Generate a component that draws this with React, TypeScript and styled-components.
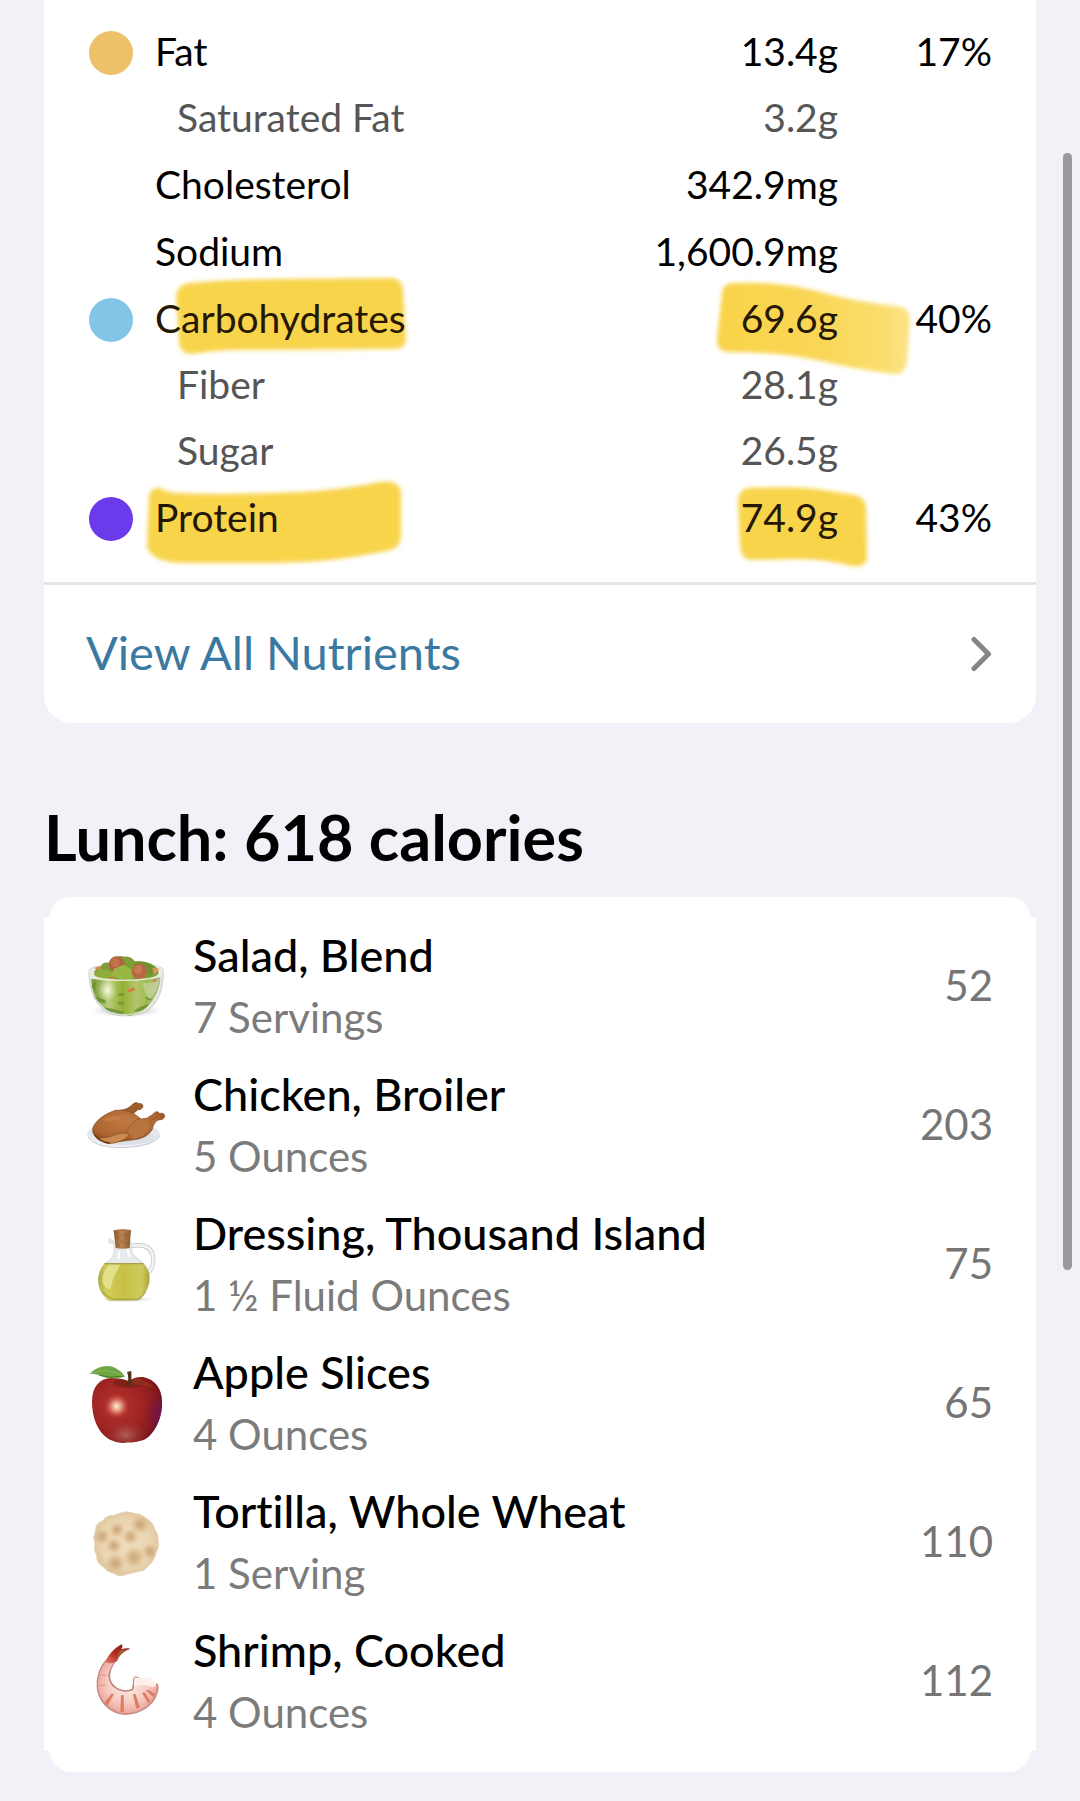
import React from "react";
import styled, { createGlobalStyle } from "styled-components";

const GlobalStyle = createGlobalStyle`
  *, *::before, *::after { box-sizing: border-box; }
  body {
    margin: 0;
    background: #f2f1f8;
    color: #000;
    font-family: Lato, "Open Sans", sans-serif;
    font-variant-ligatures: none;
  }
`;

const Page = styled.main`
  position: relative;
  padding: 0 44px 29px;
  overflow: hidden;
`;

const ScrollThumb = styled.div`
  position: absolute;
  top: 153px;
  right: 8px;
  width: 9px;
  height: 1117px;
  border-radius: 5px;
  background: #99989e;
`;

const NutrientCard = styled.section`
  padding-top: 19px;
  background: #fff;
  border-radius: 0 0 28px 28px;
`;

const NutrientTable = styled.table`
  width: 100%;
  margin-bottom: 30px;
  border-collapse: collapse;
  table-layout: fixed;
  font-size: 39px;
  line-height: 48px;
`;

const NutrientRow = styled.tr<{ $sub?: boolean }>`
  height: ${(p) => (p.$sub ? 66 : 67)}px;
  color: ${(p) => (p.$sub ? "#555" : "#000")};
`;

const DotCell = styled.td`
  width: 111px;
  padding: 0 0 0 45px;
`;

const Dot = styled.span<{ $color: string }>`
  display: block;
  width: 44px;
  height: 44px;
  border-radius: 50%;
  background: ${(p) => p.$color};
`;

const NameCell = styled.th<{ $sub?: boolean }>`
  position: relative;
  padding: 0 0 4px ${(p) => (p.$sub ? 22 : 0)}px;
  font-weight: 400;
  text-align: left;
`;

const AmountCell = styled.td`
  position: relative;
  width: 280px;
  padding: 0 0 4px;
  text-align: right;
`;

const PercentCell = styled.td`
  width: 198px;
  padding: 0 44px 4px 0;
  text-align: right;
`;

const CellText = styled.span<{ $marked?: boolean }>`
  position: relative;
  z-index: 1;
  color: ${(p) => (p.$marked ? "#241703" : "inherit")};
`;

const MarkSvg = styled.svg<{ $top: number; $left?: number; $right?: number }>`
  position: absolute;
  top: ${(p) => p.$top}px;
  left: ${(p) => (p.$left === undefined ? "auto" : `${p.$left}px`)};
  right: ${(p) => (p.$right === undefined ? "auto" : `${p.$right}px`)};
`;

const ViewAllLink = styled.a`
  display: flex;
  align-items: center;
  justify-content: space-between;
  height: 141px;
  padding: 0 44px 0 42px;
  border-top: 3px solid #e5e5e6;
  color: #3a79a1;
  font-size: 47px;
  line-height: 56px;
  text-decoration: none;
`;

const ViewAllLabel = styled.span`
  padding-bottom: 4px;
`;

const MealHeading = styled.h2`
  margin: 78px 0 24px;
  font-size: 63px;
  font-weight: 700;
  line-height: 72px;
`;

const MealCap = styled.div<{ $bottom?: boolean }>`
  height: ${(p) => (p.$bottom ? 21 : 20)}px;
  margin: 0 6px;
  background: #fff;
  border-radius: ${(p) => (p.$bottom ? "0 0 24px 24px" : "24px 24px 0 0")};
`;

const FoodList = styled.ul`
  margin: 0;
  padding: 0;
  list-style: none;
  background: #fff;
`;

const FoodRow = styled.li`
  display: flex;
  align-items: center;
  gap: 28px;
  height: 139px;
  padding: 0 43px 1px 41px;
`;

const FoodText = styled.div`
  flex: 1;
  line-height: 62px;
`;

const FoodName = styled.div`
  font-size: 45px;
  font-weight: 500;
`;

const FoodServing = styled.div`
  color: #7b7b7b;
  font-size: 42px;
`;

const Calories = styled.span`
  padding-bottom: 2px;
  color: #757575;
  font-size: 42px;
`;

type MarkProps = { d: string; w: number; h: number; top: number; left?: number; right?: number; fade?: boolean };

function Mark({ d, w, h, top, left, right, fade }: MarkProps) {
  return (
    <MarkSvg width={w} height={h} viewBox={`0 0 ${w} ${h}`} $top={top} $left={left} $right={right} aria-hidden="true">
      <defs>
        <filter id="soft" x="-5%" y="-10%" width="110%" height="120%">
          <feGaussianBlur stdDeviation="2" />
        </filter>
        <linearGradient id="fade">
          <stop offset="0" stopColor="#f9d349" />
          <stop offset="0.5" stopColor="#f9d655" />
          <stop offset="0.85" stopColor="#fadd6c" />
          <stop offset="1" stopColor="#fbe385" />
        </linearGradient>
      </defs>
      <path d={d} fill={fade ? "url(#fade)" : "#f8d44c"} filter="url(#soft)" />
    </MarkSvg>
  );
}

type Nutrient = {
  name: string;
  amount: string;
  percent?: string;
  color?: string;
  sub?: boolean;
  nameMark?: MarkProps;
  amountMark?: MarkProps;
};

const nutrients: Nutrient[] = [
  { name: "Fat", amount: "13.4g", percent: "17%", color: "#ecc169" },
  { name: "Saturated Fat", amount: "3.2g", sub: true },
  { name: "Cholesterol", amount: "342.9mg" },
  { name: "Sodium", amount: "1,600.9mg" },
  {
    name: "Carbohydrates",
    amount: "69.6g",
    percent: "40%",
    color: "#83c5e6",
    nameMark: {
      w: 242, h: 92, top: -16, left: 15,
      d: "M6 26 Q8 14 20 13 Q60 9 110 9 L222 8 Q232 9 233 20 L236 70 Q235 79 224 79 L60 80 Q40 81 22 84 Q10 84 9 72 Z",
    },
    amountMark: {
      w: 202, h: 102, top: -9, right: -77, fade: true,
      d: "M9 16 Q10 6 20 6 Q55 5 80 9 C115 15 130 24 184 29 Q197 31 197 42 L194 84 Q191 99 181 97 C140 93 100 80 64 77 Q40 75 14 75 Q3 73 4 62 Z",
    },
  },
  { name: "Fiber", amount: "28.1g", sub: true },
  { name: "Sugar", amount: "26.5g", sub: true },
  {
    name: "Protein",
    amount: "74.9g",
    percent: "43%",
    color: "#6b3aea",
    nameMark: {
      w: 264, h: 95, top: -10, left: -13,
      d: "M7 20 Q9 12 18 13 Q24 17 34 18 Q80 20 130 18 Q190 17 238 7 Q256 4 259 16 L259 62 Q258 74 244 76 Q190 88 130 88 L40 88 Q10 87 5 72 Z",
    },
    amountMark: {
      w: 138, h: 90, top: -3, right: -33,
      d: "M5 18 Q7 6 16 6 Q60 4 84 7 L122 13 Q132 15 133 26 L134 76 Q133 86 118 84 Q92 77 66 77 L18 78 Q8 77 7 64 Z",
    },
  },
];

function SaladIcon() {
  return (
    <svg width="80" height="80" viewBox="45 52 240 240" aria-hidden="true">
      <defs>
        <linearGradient id="salad" x1="0" y1="0" x2="1" y2="0">
          <stop offset="0" stopColor="#769838" />
          <stop offset="0.25" stopColor="#b7cb78" />
          <stop offset="0.45" stopColor="#93b034" />
          <stop offset="0.65" stopColor="#b3c66b" />
          <stop offset="0.8" stopColor="#a0bb50" />
          <stop offset="1" stopColor="#b1bd98" />
        </linearGradient>
        <radialGradient id="bowlShadow">
          <stop offset="0" stopColor="#777" stopOpacity="0.6" />
          <stop offset="1" stopColor="#999" stopOpacity="0" />
        </radialGradient>
        <radialGradient id="saladGlow">
          <stop offset="0" stopColor="#fffff0" stopOpacity="0.9" />
          <stop offset="1" stopColor="#e8efc0" stopOpacity="0" />
        </radialGradient>
      </defs>
      <ellipse cx="170" cy="246" rx="106" ry="20" fill="url(#bowlShadow)" />
      <path d="M57 124 C56 176 70 226 116 254 Q168 270 220 253 C266 230 282 180 280 122 Q268 108 230 108 L100 112 Q66 112 57 124Z" fill="#e9ece9" stroke="#bfc4c2" strokeWidth="2" />
      <path d="M64 150 Q168 166 272 146 C268 190 250 224 216 246 L180 262 L128 250 C84 232 66 200 64 150Z" fill="url(#salad)" />
      <path d="M72 136 Q72 120 92 116 Q96 98 116 102 L128 90 Q148 78 162 84 Q184 82 194 98 Q220 94 240 106 Q262 112 266 132 Q264 144 230 150 Q160 160 98 150 Q76 148 72 136Z" fill="#7d9e35" />
      <path d="M190 106 Q220 94 244 106 L258 122 L240 144 L222 124Z" fill="#71932f" />
      <path d="M72 118 l20 -6 l4 18 z" fill="#d88a48" />
      <path d="M246 118 l22 2 l-14 18 z" fill="#dd9650" />
      <circle cx="140" cy="107" r="24" fill="#b3623f" />
      <circle cx="136" cy="102" r="13" fill="#c4744d" />
      <path d="M76 128 L94 120 L114 126 L136 132 L128 154 L90 150 L74 142Z" fill="#8eae3c" />
      <path d="M132 120 L160 108 L184 122 L190 150 L158 156 L124 138Z" fill="#98b644" />
      <circle cx="208" cy="128" r="23" fill="#b76744" />
      <circle cx="205" cy="123" r="13" fill="#c97a55" />
      <path d="M170 184 l22 -8 l4 8 l-20 8z M116 144 l20 4 l-4 6 l-14 -4z M246 154 l16 -2 l-8 12z" fill="#d27f45" />
      <path d="M64 174 l14 -20 l-2 34z M70 206 q22 0 38 10 l-4 8 q-18 -2 -34 -18z M100 236 q30 4 62 14 l-4 8 q-40 -2 -58 -22z M142 198 q14 -8 24 0 q-16 8 -24 0z M190 248 q24 -18 48 -22 q-16 26 -48 22z M226 206 q14 -4 20 8 q-16 4 -20 -8z" fill="#6b8f31" opacity="0.85" />
      <path d="M142 226 q20 8 22 -4 q-20 -10 -22 4z" fill="#7e9f38" />
      <ellipse cx="112" cy="184" rx="30" ry="36" fill="url(#saladGlow)" />
      <path d="M218 164 q30 0 48 -10 q-4 40 -28 58 q-16 -20 -20 -48z" fill="#cdd8ad" opacity="0.6" />
      <path d="M58 126 Q60 144 98 151 Q168 160 236 150 Q278 144 280 124" fill="none" stroke="#e6ebd6" strokeWidth="4" />
      <path d="M58 136 C60 186 76 226 118 250 Q168 266 218 250 C262 228 276 184 278 136" fill="none" stroke="#d3dacb" strokeWidth="3" />
    </svg>
  );
}

function ChickenIcon() {
  return (
    <svg width="80" height="80" viewBox="45 48 240 240" aria-hidden="true">
      <defs>
        <radialGradient id="roast" cx="0.45" cy="0.35" r="0.7">
          <stop offset="0" stopColor="#c17b42" />
          <stop offset="0.65" stopColor="#ad6532" />
          <stop offset="1" stopColor="#824418" />
        </radialGradient>
        <linearGradient id="plate" x1="0" y1="0" x2="0" y2="1">
          <stop offset="0" stopColor="#d9dfe8" />
          <stop offset="1" stopColor="#f0f2f6" />
        </linearGradient>
      </defs>
      <ellipse cx="161" cy="197" rx="110" ry="38" fill="url(#plate)" />
      <path d="M54 204 Q72 236 160 236 Q252 232 270 200" fill="none" stroke="#c4c9d0" strokeWidth="3" />
      <ellipse cx="165" cy="205" rx="90" ry="23" fill="#dce1e9" />
      <path d="M150 124 Q174 122 190 104 Q200 97 206 104 Q216 101 219 110 Q218 122 204 122 Q190 136 174 142Z" fill="#9d5d2c" stroke="#7b431b" strokeWidth="2" />
      <path d="M68 184 C67 162 102 134 137 124 Q178 118 213 150 L230 148 Q244 140 258 128 Q267 127 268 134 Q280 130 284 139 Q285 153 264 153 Q251 160 246 183 Q228 211 184 213 L118 222 C83 216 68 200 68 184Z" fill="url(#roast)" stroke="#82491f" strokeWidth="2" />
      <path d="M177 174 Q191 150 216 151 Q236 154 240 172 Q230 204 190 210 Q170 192 177 174Z" fill="#b8743e" />
      <path d="M168 194 Q179 158 211 149 M240 154 Q256 151 264 140" stroke="#8b4c20" strokeWidth="3" fill="none" opacity="0.5" />
      <path d="M96 152 Q126 138 168 142 Q142 154 118 158Z" fill="#c98a51" opacity="0.45" />
      <path d="M86 208 Q120 206 144 194 Q166 189 178 196 Q169 212 142 219 Q116 228 102 220Z" fill="#c98a50" stroke="#8d5023" strokeWidth="2" />
      <path d="M74 198 Q90 220 120 222" stroke="#6e3712" strokeWidth="4" fill="none" />
    </svg>
  );
}

function DressingIcon() {
  return (
    <svg width="80" height="80" viewBox="45 42 240 240" aria-hidden="true">
      <defs>
        <linearGradient id="oil" x1="0" y1="0" x2="1" y2="0">
          <stop offset="0" stopColor="#aeac3d" />
          <stop offset="0.15" stopColor="#d3cd5c" />
          <stop offset="0.5" stopColor="#c6c047" />
          <stop offset="0.85" stopColor="#d0ca5e" />
          <stop offset="1" stopColor="#a9a53a" />
        </linearGradient>
        <linearGradient id="cork" x1="0" y1="0" x2="1" y2="0">
          <stop offset="0" stopColor="#8a5a32" />
          <stop offset="0.45" stopColor="#b8834f" />
          <stop offset="1" stopColor="#8c5c34" />
        </linearGradient>
        <radialGradient id="oilShadow">
          <stop offset="0" stopColor="#777" stopOpacity="0.6" />
          <stop offset="1" stopColor="#999" stopOpacity="0" />
        </radialGradient>
      </defs>
      <ellipse cx="168" cy="268" rx="78" ry="9" fill="url(#oilShadow)" />
      <path d="M180 109 Q239 96 249 137 Q253 174 232 190" fill="none" stroke="#bfc3c4" strokeWidth="13" />
      <path d="M180 109 Q239 96 249 137 Q253 174 232 190" fill="none" stroke="#f1f3f3" strokeWidth="9" />
      <path d="M117 85 L134 96 L182 95 L184 123 Q190 139 210 151 C236 169 246 203 232 237 Q222 260 204 271 L118 272 C88 252 78 212 90 187 Q98 162 120 149 Q130 142 133 122 L132 103 L117 97Z" fill="#e8ebeb" stroke="#c9cdcd" strokeWidth="2" />
      <path d="M103 161 L221 161 C243 184 244 219 224 250 Q214 266 204 271 L118 272 C80 248 74 194 103 161Z" fill="url(#oil)" />
      <path d="M103 161 H221" stroke="#a3a247" strokeWidth="4" />
      <path d="M118 164 L150 165 C132 196 126 216 122 236 Q105 239 98 217 Q94 187 118 164Z" fill="#eeecaa" opacity="0.65" />
      <path d="M98 244 Q112 264 134 268 L204 268 Q220 258 226 244" fill="none" stroke="#99992e" strokeWidth="4" opacity="0.7" />
      <path d="M148 122 L146 146 M173 118 L177 142" stroke="#fff" strokeWidth="6" />
      <path d="M131 62 Q156 57 183 61 L179 114 Q157 119 137 114Z" fill="url(#cork)" />
      <path d="M139 78 l7 3 M162 74 l8 3 M153 94 l7 2 M145 105 l5 1 M168 98 l6 3" stroke="#8d5b33" strokeWidth="3" />
      <path d="M131 63 Q157 57 183 62" stroke="#a57042" strokeWidth="4" fill="none" />
    </svg>
  );
}

function AppleIcon() {
  return (
    <svg width="80" height="80" viewBox="45 38 240 240" aria-hidden="true">
      <defs>
        <radialGradient id="apple" cx="0.36" cy="0.44" r="0.65">
          <stop offset="0" stopColor="#b7322d" />
          <stop offset="0.5" stopColor="#a12523" />
          <stop offset="0.85" stopColor="#84191b" />
          <stop offset="1" stopColor="#641017" />
        </radialGradient>
        <radialGradient id="appleShine">
          <stop offset="0" stopColor="#fff4dd" />
          <stop offset="0.35" stopColor="#efab92" stopOpacity="0.85" />
          <stop offset="1" stopColor="#b72d29" stopOpacity="0" />
        </radialGradient>
        <radialGradient id="appleBase">
          <stop offset="0" stopColor="#b9756c" stopOpacity="0.75" />
          <stop offset="1" stopColor="#9d2927" stopOpacity="0" />
        </radialGradient>
        <radialGradient id="appleViolet">
          <stop offset="0" stopColor="#6d126f" stopOpacity="0.85" />
          <stop offset="1" stopColor="#701437" stopOpacity="0" />
        </radialGradient>
        <clipPath id="appleBody">
          <path d="M66 154 C66 110 88 84 124 83 Q154 83 176 93 Q194 78 219 80 C256 87 276 117 276 153 C278 205 251 257 218 270 Q194 278 174 276 Q145 282 117 267 C83 245 66 202 66 154Z" />
        </clipPath>
      </defs>
      <g clipPath="url(#appleBody)">
        <rect x="60" y="70" width="225" height="215" fill="url(#apple)" />
        <ellipse cx="176" cy="99" rx="46" ry="13" fill="#602012" opacity="0.55" />
        <path d="M188 84 Q232 87 253 114 Q225 102 186 103Z" fill="#9f431e" opacity="0.45" />
        <ellipse cx="276" cy="195" rx="52" ry="79" fill="url(#appleViolet)" />
        <ellipse cx="168" cy="254" rx="72" ry="50" fill="url(#appleBase)" />
      </g>
      <circle cx="140" cy="168" r="40" fill="url(#appleShine)" />
      <path d="M172 103 Q178 82 171 65 L184 62 Q186 82 181 104Z" fill="#50301e" />
      <path d="M59 71 C80 47 116 40 137 54 Q155 63 165 79 C136 85 107 87 88 75 Q73 69 59 71Z" fill="#6fa542" />
      <path d="M68 68 Q112 50 160 78" fill="none" stroke="#85b65a" strokeWidth="3" />
      <path d="M88 75 Q120 84 157 78" fill="none" stroke="#487b2b" strokeWidth="3" />
    </svg>
  );
}

function TortillaIcon() {
  const spots = [
    [96, 138, 26], [141, 117, 25], [181, 138, 26], [210, 102, 30],
    [132, 165, 26], [192, 200, 34], [136, 218, 32], [240, 182, 26],
  ];
  return (
    <svg width="80" height="80" viewBox="45 34 240 240" aria-hidden="true">
      <defs>
        <radialGradient id="tortilla">
          <stop offset="0" stopColor="#eedcbc" />
          <stop offset="0.75" stopColor="#ead5b1" />
          <stop offset="1" stopColor="#e1c9a2" />
        </radialGradient>
        <radialGradient id="toast">
          <stop offset="0" stopColor="#c0935f" stopOpacity="0.75" />
          <stop offset="0.45" stopColor="#c99f6e" stopOpacity="0.5" />
          <stop offset="1" stopColor="#d6b27f" stopOpacity="0" />
        </radialGradient>
      </defs>
      <path d="M151 67 Q173 59 192 68 Q214 69 227 82 Q248 92 254 114 Q266 130 264 150 Q271 169 257 185 Q253 214 235 225 Q225 242 203 243 Q180 248 164 253 Q147 260 134 249 Q111 245 101 229 Q79 219 80 195 Q69 179 75 160 Q67 139 76 122 Q75 98 98 90 Q111 72 132 74Z" fill="url(#tortilla)" stroke="#e3d1b3" strokeWidth="2" />
      {spots.map(([x, y, r]) => (
        <circle key={`${x}-${y}`} cx={x} cy={y} r={r} fill="url(#toast)" />
      ))}
      <path d="M82 178 Q92 210 112 230 M140 247 Q170 249 201 236 M236 222 Q251 202 252 188" fill="none" stroke="#d9ba8c" strokeWidth="3" opacity="0.5" />
    </svg>
  );
}

function ShrimpIcon() {
  return (
    <svg width="80" height="80" viewBox="45 48 240 240" aria-hidden="true">
      <defs>
        <linearGradient id="shrimpTail" x1="1" y1="0" x2="0" y2="1">
          <stop offset="0" stopColor="#6d2014" />
          <stop offset="0.55" stopColor="#b52a20" />
          <stop offset="1" stopColor="#e47d6f" />
        </linearGradient>
        <radialGradient id="shrimpBody" gradientUnits="userSpaceOnUse" cx="172" cy="173" r="98">
          <stop offset="0.25" stopColor="#fbe3dc" />
          <stop offset="0.65" stopColor="#f6c9c0" />
          <stop offset="0.88" stopColor="#efaea5" />
          <stop offset="1" stopColor="#cf8a80" />
        </radialGradient>
      </defs>
      <path d="M110 105 C91 123 79 157 82 188 C87 232 122 267 166 268 C216 266 260 236 264 188 L262 178 L196 156 L188 194 Q159 204 136 187 C111 168 116 139 134 111Z" fill="url(#shrimpBody)" stroke="#c18d83" strokeWidth="4" strokeLinejoin="round" />
      <path d="M190 157 Q210 161 226 158 Q246 156 258 174 Q260 184 248 187 Q218 175 192 183Z" fill="#fdf0ea" />
      <path d="M106 110 C116 89 132 69 156 58 Q160 65 153 73 Q169 68 181 71 C158 79 149 88 141 109 Q123 120 106 110Z" fill="url(#shrimpTail)" />
      <path d="M150 76 Q140 91 137 109 Q154 81 181 71Z" fill="#a65b2e" />
      <path d="M126 205 L102 234 L112 242 L131 209Z M153 211 L151 260 L162 260 L161 211Z M189 208 L199 251 L210 247 L196 206Z M216 203 L234 235 L241 228 L224 202Z M227 196 L250 216 L256 207 L236 195Z" fill="#dc7d62" />
      <path d="M91 151 L108 151 M88 182 L105 180" stroke="#e29b8d" strokeWidth="4" strokeLinecap="round" />
      <path d="M118 139 Q112 164 132 186 Q158 206 188 193 L192 157" fill="none" stroke="#b9827a" strokeWidth="3" />
    </svg>
  );
}

const foods = [
  { name: "Salad, Blend", serving: "7 Servings", calories: 52, icon: <SaladIcon /> },
  { name: "Chicken, Broiler", serving: "5 Ounces", calories: 203, icon: <ChickenIcon /> },
  { name: "Dressing, Thousand Island", serving: "1 ½ Fluid Ounces", calories: 75, icon: <DressingIcon /> },
  { name: "Apple Slices", serving: "4 Ounces", calories: 65, icon: <AppleIcon /> },
  { name: "Tortilla, Whole Wheat", serving: "1 Serving", calories: 110, icon: <TortillaIcon /> },
  { name: "Shrimp, Cooked", serving: "4 Ounces", calories: 112, icon: <ShrimpIcon /> },
];

export default function App() {
  return (
    <Page>
      <GlobalStyle />
      <NutrientCard>
        <NutrientTable>
          <tbody>
            {nutrients.map((n) => (
              <NutrientRow key={n.name} $sub={n.sub}>
                <DotCell>{n.color && <Dot $color={n.color} />}</DotCell>
                <NameCell scope="row" $sub={n.sub}>
                  {n.nameMark && <Mark {...n.nameMark} />}
                  <CellText $marked={!!n.nameMark}>{n.name}</CellText>
                </NameCell>
                <AmountCell>
                  {n.amountMark && <Mark {...n.amountMark} />}
                  <CellText $marked={!!n.amountMark}>{n.amount}</CellText>
                </AmountCell>
                <PercentCell>{n.percent}</PercentCell>
              </NutrientRow>
            ))}
          </tbody>
        </NutrientTable>
        <ViewAllLink href="#nutrients">
          <ViewAllLabel>View All Nutrients</ViewAllLabel>
          <svg width="22" height="36" viewBox="0 0 22 36" fill="none" aria-hidden="true">
            <path d="M4 3.5 L18.5 18 L4 32.5" stroke="#858585" strokeWidth="5" strokeLinecap="round" strokeLinejoin="round" />
          </svg>
        </ViewAllLink>
      </NutrientCard>
      <section>
        <MealHeading>Lunch: 618 calories</MealHeading>
        <MealCap />
        <FoodList>
          {foods.map((f) => (
            <FoodRow key={f.name}>
              {f.icon}
              <FoodText>
                <FoodName>{f.name}</FoodName>
                <FoodServing>{f.serving}</FoodServing>
              </FoodText>
              <Calories>{f.calories}</Calories>
            </FoodRow>
          ))}
        </FoodList>
        <MealCap $bottom />
      </section>
      <ScrollThumb />
    </Page>
  );
}
